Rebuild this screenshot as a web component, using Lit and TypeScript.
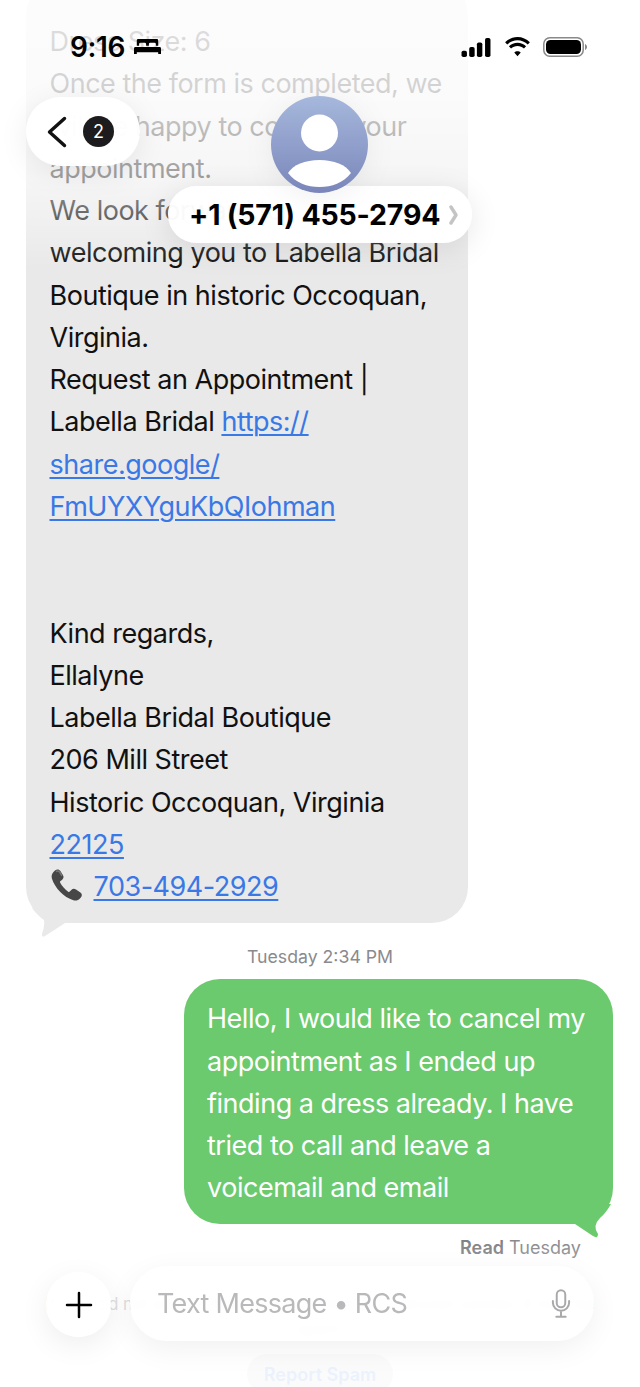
import { LitElement, html, css } from "lit";
import { customElement } from "lit/decorators.js";

@customElement("app-root")
export class AppRoot extends LitElement {
  static styles = css`
    :host { display: block; }
    .screen { position: relative; width: 640px; height: 1387px; overflow: hidden; background: #fff;
      font-family: Inter, "Liberation Sans", sans-serif; color: #0a0a0a; }
    .thread { display: flex; flex-direction: column; margin-top: -20px; }
    .bubble { position: relative; font-size: 27px; line-height: 42.25px; letter-spacing: -0.48px; box-sizing: border-box; }
    .in { margin-left: 26px; width: 442px; background: #e9e9e9; border-radius: 36px; padding: 41px 20px 15px 23.5px; color: #111; }
    .in a { color: #3a78e6; text-decoration: underline; text-underline-offset: 3px; text-decoration-thickness: 1.5px; }
    .line { display: block; white-space: nowrap; height: 42.25px; }
    .phone { width: 36px; height: 36px; vertical-align: -7px; margin-right: 8px; }
    .tail { position: absolute; }
    .tail-in { left: 0; bottom: -15px; width: 40px; height: 38px; }
    .tail-out { right: 0; bottom: -15px; width: 40px; height: 35px; }
    .stamp { text-align: center; font-size: 17.7px; line-height: 22px; color: #8a8a8e; margin-top: 23px; }
    .out { align-self: flex-start; margin: 11px 0 0 184px; width: 429px; background: #6aca6d; color: #fff;
      border-radius: 36px; padding: 19px 20px 14px 23px; }
    .read { margin: 13px 59px 0 0; text-align: right; font-size: 18px; line-height: 22px; color: #8a8a8e; }
    .read b { font-weight: 600; color: #808084; }
    .legal { position: absolute; left: 20px; right: 20px; top: 1292px; text-align: center; font-size: 16.6px; line-height: 25px; color: #bdbdbd; }
    .spam { position: absolute; left: 247px; top: 1354px; width: 146px; height: 40px; border-radius: 20px; background: #f7f7f7;
      color: #d3e3fb; font-size: 18px; font-weight: 600; display: flex; align-items: center; justify-content: center; }
    .top-fade { position: absolute; left: 0; right: 0; top: 0; height: 280px; pointer-events: none;
      background: linear-gradient(to bottom, rgba(255,255,255,.88) 0, rgba(255,255,255,.8) 100px, rgba(255,255,255,.58) 180px, rgba(255,255,255,.3) 225px, rgba(255,255,255,0) 268px); }
    .bottom-fade { position: absolute; left: 0; right: 0; top: 1240px; bottom: 0; pointer-events: none;
      background: linear-gradient(to bottom, rgba(255,255,255,0), rgba(255,255,255,.5) 60px, rgba(255,255,255,.55)); }
    .status { position: absolute; left: 70px; right: 53px; top: 30px; height: 34px; display: flex; align-items: center; justify-content: space-between; }
    .time-wrap { display: flex; align-items: center; gap: 9px; }
    .time { font-size: 28px; font-weight: 600; letter-spacing: -0.4px; color: #000; }
    .sys { display: flex; align-items: center; gap: 12px; }
    .back { position: absolute; left: 26px; top: 97px; width: 114px; height: 69px; border-radius: 35px; background: rgba(255,255,255,.97);
      box-shadow: 0 6px 30px rgba(0,0,0,.08); display: flex; align-items: center; padding-left: 20px; box-sizing: border-box; gap: 15px; }
    .badge { width: 31px; height: 31px; border-radius: 50%; background: #1c1c1e; color: #fff; font-size: 18px; display: flex; align-items: center; justify-content: center; }
    .avatar { position: absolute; left: 271px; top: 96px; width: 97px; height: 97px; z-index: 2; filter: drop-shadow(0 4px 14px rgba(0,0,0,.06)); }
    .name { position: absolute; left: 168px; top: 186px; width: 304px; height: 57px; border-radius: 29px; background: rgba(255,255,255,.96);
      box-shadow: 0 6px 30px rgba(0,0,0,.1); display: flex; align-items: center; padding-left: 21px; box-sizing: border-box; gap: 9px;
      font-size: 28.5px; font-weight: 700; letter-spacing: -0.2px; color: #000; z-index: 1; }
    .plus { position: absolute; left: 46px; top: 1272px; width: 65px; height: 65px; border-radius: 50%; background: rgba(255,255,255,.97);
      box-shadow: 0 8px 30px rgba(0,0,0,.07); display: flex; align-items: center; justify-content: center; }
    .input { position: absolute; left: 130px; top: 1266px; width: 464px; height: 75px; border-radius: 38px; background: rgba(255,255,255,.9);
      backdrop-filter: blur(3px);
      box-shadow: 0 8px 30px rgba(0,0,0,.06); display: flex; align-items: center; justify-content: space-between; padding: 0 23px 0 27px; box-sizing: border-box;
      font-size: 27px; letter-spacing: -0.72px; color: #b9b9bb; }
  `;

  private line(t: unknown) { return html`<span class="line">${t}</span>`; }

  render() {
    const inLines: unknown[] = [
      "Dress Size: 6",
      "Once the form is completed, we",
      "will be happy to confirm your",
      "appointment.",
      "We look forward to",
      "welcoming you to Labella Bridal",
      "Boutique in historic Occoquan,",
      "Virginia.",
      "Request an Appointment |",
      html`Labella Bridal <a>https://</a>`,
      html`<a>share.google/</a>`,
      html`<a>FmUYXYguKbQIohman</a>`,
      "",
      "",
      "Kind regards,",
      "Ellalyne",
      "Labella Bridal Boutique",
      "206 Mill Street",
      "Historic Occoquan, Virginia",
      html`<a>22125</a>`,
      html`<svg class="phone" viewBox="0 0 36 36"><path d="M5 3.500c2-1.600 4.200-1.200 5.400.6l2.600 4.200c1 1.700.5 3.400-1 4.600l-1.600 1.200c-.5.4-.5 1-.2 1.600 1.800 3.400 4.600 6.600 8 9 .6.4 1.100.3 1.600-.2l1.500-1.500c1.300-1.300 3-1.600 4.700-.5l4.400 2.900c1.700 1.200 2 3.300.4 5.100l-1.100 1.300c-1.500 1.700-3.900 2.300-6.300 1.400C13.800 30.500 4.600 20.600 1.900 11.500 1.200 9 1.900 6.300 3.700 4.700z" fill="#474747"/><path d="M6 4.500c1.600-.8 3-.4 4 1l2 3.400" stroke="#777" stroke-width="1.500" fill="none"/></svg><a>703-494-2929</a>`,
    ];
    const outLines = [
      "Hello, I would like to cancel my",
      "appointment as I ended up",
      "finding a dress already. I have",
      "tried to call and leave a",
      "voicemail and email",
    ];
    return html`<div class="screen">
      <div class="thread">
        <div class="bubble in">
          ${inLines.map((l) => this.line(l))}
          <svg class="tail tail-in" viewBox="0 0 40 38"><path d="M6 8Q12 16 18 20Q19 25 16 34Q15.500 38 19 36Q30 29 39 23L30 5Z" fill="#e9e9e9"/></svg>
        </div>
        <div class="stamp">Tuesday 2:34 PM</div>
        <div class="bubble out">
          ${outLines.map((l) => this.line(l))}
          <svg class="tail tail-out" viewBox="0 0 40 35"><path d="M0 18L2 20L20 32Q25 35 25 30Q19 22 27 14Q33 9 38 0L0 0Z" fill="#6aca6d"/></svg>
        </div>
        <div class="read"><b>Read</b> Tuesday</div>
      </div>

      <div class="legal">If you did not expect this message from an unknown sender, it may be spam.</div>
      <div class="spam">Report Spam</div>
      <div class="top-fade"></div>
      <div class="bottom-fade"></div>

      <div class="status">
        <div class="time-wrap">
          <span class="time">9:16</span>
          <svg width="27" height="19" viewBox="0 0 29 18"><path d="M3 1.500A1.500 1.500 0 0 1 4.500 0h20A1.500 1.500 0 0 1 26 1.500V7h-2.500V5.500a1.500 1.500 0 0 0-1.500-1.500h-4.500A1.500 1.500 0 0 0 16 5.500V7h-3V5.500A1.500 1.500 0 0 0 11.500 4H7a1.500 1.500 0 0 0-1.500 1.500V7H3z" fill="#000"/><path d="M1.500 8.500h26A1.500 1.500 0 0 1 29 10v6h-3v-2H3v2H0v-6a1.500 1.500 0 0 1 1.500-1.500z" fill="#000"/></svg>
        </div>
        <div class="sys">
          <svg width="32" height="19" viewBox="0 0 32 21"><rect x="0" y="14" width="6" height="7" rx="2"/><rect x="8.500" y="10" width="6" height="11" rx="2"/><rect x="17" y="5" width="6" height="16" rx="2"/><rect x="26" y="0" width="6" height="21" rx="2"/></svg>
          <svg width="27" height="20" viewBox="0 0 27 21"><path d="M13.500 3.500c4.200 0 8 1.700 10.800 4.400l2.200-2.500C23 2.100 18.500 0 13.500 0S4 2.100.5 5.400l2.200 2.500c2.800-2.700 6.600-4.400 10.800-4.400z"/><path d="M13.500 9.500c2.600 0 5 1 6.800 2.700l2.200-2.500c-2.400-2.200-5.600-3.600-9-3.600s-6.600 1.400-9 3.600l2.200 2.500c1.800-1.700 4.200-2.700 6.800-2.700z"/><path d="M13.500 15c-1.300 0-2.500.5-3.400 1.300l3.400 3.900 3.400-3.900c-.9-.8-2.100-1.300-3.400-1.300z"/></svg>
          <svg width="44" height="20" viewBox="0 0 44 20"><rect x=".8" y=".8" width="39.400" height="18.400" rx="6" fill="none" stroke="#888" stroke-width="1.500"/><rect x="3" y="3" width="35" height="14" rx="4.500"/><path d="M42 7c1.200.5 2 1.600 2 3s-.8 2.500-2 3z" fill="#888"/></svg>
        </div>
      </div>

      <div class="back">
        <svg width="22" height="32" viewBox="0 0 22 32"><path d="M18.500 2.500 3.500 16 18.500 29.500" fill="none" stroke="#111" stroke-width="3.400" stroke-linecap="round" stroke-linejoin="round"/></svg>
        <span class="badge">2</span>
      </div>
      <svg class="avatar" viewBox="0 0 97 97">
        <defs><linearGradient id="av" x1="0" y1="0" x2="0" y2="1"><stop offset="0" stop-color="#a6b8dc"/><stop offset="1" stop-color="#7a86ba"/></linearGradient></defs>
        <circle cx="48.500" cy="48.500" r="48.500" fill="url(#av)"/>
        <circle cx="48.500" cy="37" r="18.500" fill="#fff"/>
        <path d="M17 77C22 69 34 64 48.500 64S75 69 80 77C72 87 61 91 48.500 91S25 87 17 77z" fill="#fff"/>
      </svg>
      <div class="name"><span>+1 (571) 455-2794</span>
        <svg width="9" height="20" viewBox="0 0 9 20"><path d="M2 2l5 8-5 8" fill="none" stroke="#c4c4c4" stroke-width="3.400" stroke-linecap="round" stroke-linejoin="round"/></svg>
      </div>

      <div class="plus"><svg width="28" height="28" viewBox="0 0 28 28"><path d="M14 2v24M2 14h24" stroke="#000" stroke-width="2.500" stroke-linecap="round"/></svg></div>
      <div class="input"><span>Text Message • RCS</span>
        <svg width="20" height="29" viewBox="0 0 22 34" fill="none" stroke="#a9a9ab" stroke-width="2.300" stroke-linecap="round"><rect x="6" y="1.500" width="10" height="20" rx="5"/><path d="M1.500 14v2a9.500 9.500 0 0 0 19 0v-2M11 26v6M5.500 32.500h11"/></svg>
      </div>
    </div>`;
  }
}
